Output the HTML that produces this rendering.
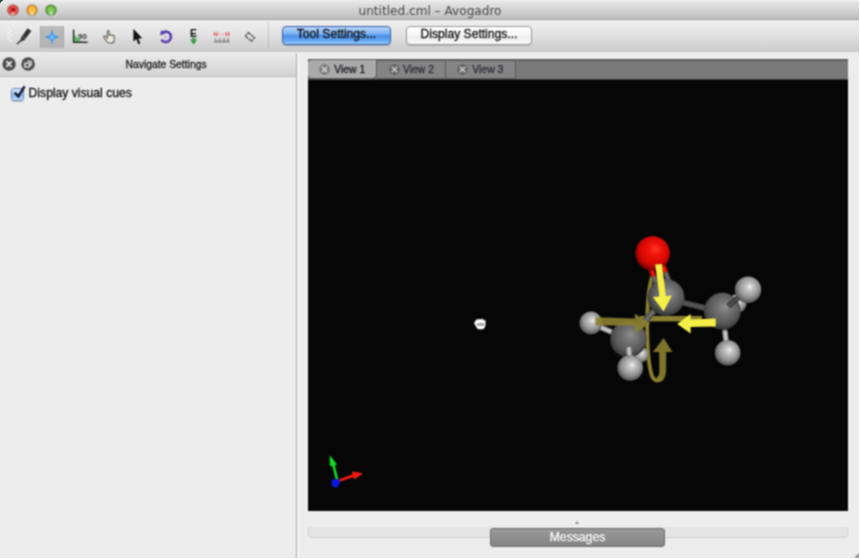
<!DOCTYPE html>
<html lang="en">
<head>
<meta charset="utf-8">
<title>untitled.cml – Avogadro</title>
<style>
*{box-sizing:border-box;margin:0;padding:0}
html,body{width:860px;height:559px;overflow:hidden;background:#fff;font-family:"Liberation Sans",sans-serif;}
#win{position:absolute;left:0;top:0;width:859px;height:558px;background:#ededed;overflow:hidden;border-radius:5px 3px 0 0;filter:url(#wb)}
#corner{position:absolute;left:0;top:0;width:4px;height:4px;background:#1c4a3a}
#titlebar{position:absolute;left:0;top:0;width:859px;height:20px;background:linear-gradient(#f2f2f2 0,#e6e6e6 1.5px,#bebebe 19px);border-bottom:1px solid #9e9e9e;border-radius:5px 3px 0 0}
#toolbar{position:absolute;left:0;top:20px;width:859px;height:32px;background:linear-gradient(#efefef 0,#e4e4e4 40%,#cacaca 100%)}
#title{position:absolute;left:1px;top:4px;width:858px;text-align:center;font-family:"DejaVu Sans","Liberation Sans",sans-serif;font-size:12.1px;color:#4a4a4a;line-height:15px}
.tl{position:absolute;top:4.9px;width:10.6px;height:10.6px;border-radius:50%}
#tl1{left:7.9px;background:radial-gradient(circle at 50% 50%,#8c0a08 0,#a81410 18%,#f0524c 45%,#f4605a 60%,#c03a36 100%);box-shadow:0 0 0 .6px #8e2a26,inset 0 0 1.5px #7a1410}
#tl2{left:26.7px;background:radial-gradient(circle at 50% 55%,#f8c050 0,#f6b840 45%,#e09a28 75%,#b87818 100%);box-shadow:0 0 0 .6px #946018,inset 0 0 1.5px #8a5810}
#tl3{left:45.5px;background:radial-gradient(circle at 50% 55%,#8cd060 0,#78c04c 45%,#58a038 75%,#3c7c24 100%);box-shadow:0 0 0 .6px #386c20,inset 0 0 1.5px #2c5c18}
.tl i{position:absolute;left:2px;right:2px;bottom:0.5px;height:5px;border-radius:50%;background:radial-gradient(ellipse at 50% 100%,rgba(255,255,255,.75),rgba(255,255,255,0) 70%)}
#sel{position:absolute;left:40px;top:26px;width:24px;height:22px;background:linear-gradient(#bcbcbc,#b2b2b2);border-left:1px solid #a6a6a6;border-right:1px solid #a6a6a6}
.btn{position:absolute;top:26px;height:19px;border-radius:4px;font-size:12.1px;line-height:15px;text-align:center;color:#111}
#b1{left:282px;width:109px;background:linear-gradient(#b6d5f7 0,#7db1f0 40%,#4a8fe9 52%,#64a8f2 80%,#98ccfa 100%);border:1px solid #3a5fae;box-shadow:0 1px 1px rgba(0,0,0,.2)}
#b2{left:406px;width:126px;background:linear-gradient(#ffffff 0,#f6f6f6 50%,#ececec 52%,#f8f8f8 100%);border:1px solid #9a9a9a;box-shadow:0 1px 1px rgba(0,0,0,.15)}
#left{position:absolute;left:0;top:53px;width:297px;height:505px;background:#ededed;border-right:1px solid #a8a8a8}
#lhead{position:absolute;left:0;top:0;width:296px;height:24px;background:linear-gradient(#eaeaea,#d4d4d4);border-bottom:1px solid #bdbdbd;font-size:10.35px;line-height:23px;color:#1a1a1a}
#lhead span{position:absolute;left:125.5px;top:0}
#cb{position:absolute;left:11.3px;top:35px;width:13px;height:13px;border-radius:3px;border:1px solid #6c82b8;background:linear-gradient(#dfe9fb 0,#a9c9f5 45%,#8fbcf4 60%,#c8e4fd 100%);box-shadow:0 1px 1px rgba(0,0,0,.2)}
#cbl,.btn,#lhead span,.tab span,#msg{-webkit-text-stroke:.3px currentColor}
#cbl{position:absolute;left:28.6px;top:33.2px;font-size:12.15px;line-height:14px;color:#111}
#split{position:absolute;left:297px;top:53px;width:2px;height:505px;background:#f6f6f6}
#tabbar{position:absolute;left:308px;top:58.5px;width:540px;height:21.5px;background:#797979;border-top:2px solid #5e5e5e;border-bottom:1px solid #383838}
.tab{position:absolute;font-size:10.4px;line-height:18px;color:#26262c}
.tab svg{position:absolute}
.tab span{position:absolute;top:0}
#t1{left:0;top:-1px;width:68px;height:18.5px;background:#aaaaaa;border-radius:4px 0 4px 4px;box-shadow:0 1.5px 0 #5a5a5a,1px 0 0 #5a5a5a;color:#1c1c24}
#t2{left:68.5px;top:0;width:69px;height:18.5px;background:#848484;color:#30303a;border-right:1px solid #5c5c5c;border-bottom:1px solid #5c5c5c}
#t3{left:137.5px;top:0;width:70px;height:18.5px;background:#848484;color:#30303a;border-right:1px solid #5c5c5c;border-bottom:1px solid #5c5c5c}
#view{position:absolute;left:308px;top:80px;width:540px;height:430.6px;background:#060606}
#bar{position:absolute;left:308px;top:527px;width:540px;height:11px;border:1px solid #d2d2d2;border-top-color:#e2e2e2;border-radius:0 0 4px 4px;background:#e4e4e4}
#msg{position:absolute;left:490px;top:528px;width:175px;height:19px;border-radius:3px;background:linear-gradient(#9a9a9a,#848484);border:1px solid #6e6e6e;color:#fff;font-size:12.2px;line-height:17px;text-align:center;text-shadow:0 -1px 0 #666}
#arr{position:absolute;left:575.2px;top:520.5px;width:0;height:0;border-left:2px solid transparent;border-right:2px solid transparent;border-bottom:3px solid #8a8a8a}
</style>
</head>
<body>
<svg width="0" height="0" style="position:absolute"><defs><filter id="wb" x="0" y="0" width="100%" height="100%" color-interpolation-filters="sRGB"><feConvolveMatrix order="3" kernelMatrix="0.0625 0.1250 0.0625 0.1250 0.2500 0.1250 0.0625 0.1250 0.0625" edgeMode="duplicate" preserveAlpha="true"/></filter></defs></svg>
<div id="corner"></div>
<div id="win">
 <div id="titlebar"></div>
 <div id="toolbar"></div>
 <div id="title">untitled.cml – Avogadro</div>
 <div class="tl" id="tl1"><i></i></div><div class="tl" id="tl2"><i></i></div><div class="tl" id="tl3"><i></i></div>
 <div id="sel"></div>
 <svg id="icons" width="280" height="32" viewBox="0 20 280 32" style="position:absolute;left:0;top:20px">
  <defs>
   <radialGradient id="gstar" cx="50%" cy="50%" r="50%"><stop offset="0" stop-color="#9ad4ff"/><stop offset=".35" stop-color="#3c9cf8"/><stop offset="1" stop-color="#1f6fe0"/></radialGradient>
  </defs>
  <!-- grip -->
  <g fill="#fafafa"><circle cx="8.5" cy="28" r="1"/><circle cx="10.5" cy="30.5" r="1"/><circle cx="8.5" cy="33" r="1"/><circle cx="10.5" cy="35.5" r="1"/><circle cx="8.5" cy="38" r="1"/><circle cx="10.5" cy="40.5" r="1"/></g>
  <!-- pencil -->
  <g>
   <path d="M27.6 28.2 L31.4 31 L24.6 40 L20.6 41.8 L21 37.6 Z" fill="#333"/>
   <path d="M21 40.2 L17.4 43.8" stroke="#3a3a3a" stroke-width="1.5" stroke-linecap="round"/>
   <path d="M22.4 36.6 L25.6 39" stroke="#8a8a8a" stroke-width=".8"/>
  </g>
  <!-- navigate star -->
  <path d="M52 28.8 C52.6 34 53.6 36 60 37 C53.6 38 52.6 40 52 45.2 C51.4 40 50.4 38 44 37 C50.4 36 51.4 34 52 28.8 Z" fill="url(#gstar)"/>
  <!-- measure -->
  <g>
   <path d="M74.4 41.8 L74.4 34.8 L81.6 41.8 Z" fill="#4cc058"/>
   <path d="M73.6 29.4 L73.6 42.2 L87.6 42.2" fill="none" stroke="#2a2a2a" stroke-width="1.5"/>
   <text x="78" y="39.2" font-family="Liberation Sans, sans-serif" font-weight="bold" font-size="7" fill="#2e2e2e" textLength="8.8" lengthAdjust="spacingAndGlyphs">90</text>
  </g>
  <!-- hand -->
  <g>
   <path d="M105.6 36.2 C104.4 35.2 103 36.2 104 37.6 L106.6 41.2 C107.4 42.6 108.4 43 110 43 L111.8 43 C113.4 43 114 42 114.2 40.6 L114.4 36.6 C114.4 35.4 113 35.2 112.8 36.2 C112.8 34.8 111.2 34.6 111 35.8 C111 34.6 109.4 34.4 109.2 35.6 L109.2 31.6 C109.2 30.2 107.4 30.2 107.4 31.6 L107.4 38 Z" fill="#efe8d8" stroke="#5c5c5c" stroke-width="1.1"/>
  </g>
  <!-- arrow cursor -->
  <path d="M133.4 28.8 L133.4 41.6 L136.3 39 L138.4 44.2 L140.4 43.4 L138.3 38.4 L142.2 38.2 Z" fill="#111"/>
  <!-- rotate -->
  <g>
   <path d="M162.2 33 A5.2 5.2 0 1 1 161.4 39.6" fill="none" stroke="#5a40b0" stroke-width="2.6"/>
   <path d="M160 35.4 L161 30.2 L165.6 33.6 Z" fill="#5a40b0"/>
   <circle cx="165.6" cy="37" r=".8" fill="#5a40b0"/>
  </g>
  <!-- E optimize -->
  <g>
   <text x="190" y="36.6" font-family="Liberation Sans, sans-serif" font-weight="bold" font-size="10.4" fill="#111">E</text>
   <path d="M192.6 37.6 L194.6 37.6 L194.6 40.4 L196.8 40.4 L193.6 44.4 L190.4 40.4 L192.6 40.4 Z" fill="#2f9a3c"/>
   <path d="M190.4 39.6 L196.8 39.6" stroke="#2f9a3c" stroke-width="1"/>
  </g>
  <!-- H-H measure -->
  <g>
   <text x="213.6" y="35.8" font-family="Liberation Sans, sans-serif" font-weight="bold" font-size="6.2" fill="#e8302c" textLength="16">H--H</text>
   <path d="M214 41.8 L229.6 41.8" stroke="#444" stroke-width=".8"/>
   <text x="214.4" y="41" font-family="Liberation Sans, sans-serif" font-size="4" fill="#333" textLength="14.6">1.0.0.0</text>
  </g>
  <!-- diamond -->
  <g transform="rotate(40 250 36.8)"><rect x="246" y="34.6" width="8" height="4.6" fill="none" stroke="#444" stroke-width="1.3" stroke-dasharray="2.6 .8"/></g>
  <!-- separator -->
  <path d="M268.3 22.5 L268.3 49.5" stroke="#8a8a8a" stroke-width="1" stroke-dasharray="1 2"/>
 </svg>
 <div class="btn" id="b1">Tool Settings...</div>
 <div class="btn" id="b2">Display Settings...</div>
 <div id="left">
  <div id="lhead"><svg width="40" height="24" viewBox="0 0 40 24" style="position:absolute;left:0;top:0">
    <circle cx="9.1" cy="11" r="6.7" fill="#4c4c4c"/><circle cx="28.1" cy="11" r="6.7" fill="#4c4c4c"/>
    <path d="M7 8.9 L11.2 13.1 M11.2 8.9 L7 13.1" stroke="#ececec" stroke-width="2" stroke-linecap="round"/>
    <path d="M27.2 8.3 L31.3 8.3 L31.3 11.9 L29.8 11.9" fill="none" stroke="#e4e4e4" stroke-width="1.2"/>
    <rect x="24.9" y="10.3" width="4.6" height="3.6" fill="#4c4c4c" stroke="#f0f0f0" stroke-width="1.3"/>
   </svg><span>Navigate Settings</span></div>
  <div id="cb"></div>
  <svg width="18" height="18" viewBox="0 0 18 18" style="position:absolute;left:10px;top:30px"><path d="M4.6 9.6 L8.4 13.4 L14.6 3.4" fill="none" stroke="#131c34" stroke-width="2.5" stroke-linejoin="miter"/></svg>
  <div id="cbl">Display visual cues</div>
 </div>
 <div id="split"></div>
 <div id="tabbar">
  <div class="tab" id="t1"><svg style="left:11.3px;top:4.4px" width="11" height="11" viewBox="0 0 11 11"><circle cx="5.5" cy="5.5" r="5.4" fill="#7c7c7c"/><path d="M3.3 3.3 L7.7 7.7 M7.7 3.3 L3.3 7.7" stroke="#cfcfcf" stroke-width="1.7" stroke-linecap="round"/></svg><span style="left:26.2px;top:1px">View 1</span></div>
  <div class="tab" id="t2"><svg style="left:12.2px;top:3.6px" width="11" height="11" viewBox="0 0 11 11"><circle cx="5.5" cy="5.5" r="5.4" fill="#666666"/><path d="M3.3 3.3 L7.7 7.7 M7.7 3.3 L3.3 7.7" stroke="#c6c6c6" stroke-width="1.7" stroke-linecap="round"/></svg><span style="left:26.5px">View 2</span></div>
  <div class="tab" id="t3"><svg style="left:11.2px;top:3.6px" width="11" height="11" viewBox="0 0 11 11"><circle cx="5.5" cy="5.5" r="5.4" fill="#666666"/><path d="M3.3 3.3 L7.7 7.7 M7.7 3.3 L3.3 7.7" stroke="#c6c6c6" stroke-width="1.7" stroke-linecap="round"/></svg><span style="left:26.8px">View 3</span></div>
 </div>
 <div id="view"><!--SCENE_START--><svg id="scene" width="540" height="431" viewBox="308 79 540 431" style="position:absolute;left:0;top:-1px">
<defs>
 <radialGradient id="gC" cx="52%" cy="44%" r="60%" fx="58%" fy="38%"><stop offset="0" stop-color="#8e8e8e"/><stop offset=".3" stop-color="#747474"/><stop offset=".7" stop-color="#565656"/><stop offset="1" stop-color="#2a2a2a"/></radialGradient>
 <radialGradient id="gH" cx="52%" cy="44%" r="60%" fx="58%" fy="38%"><stop offset="0" stop-color="#f0f0f0"/><stop offset=".22" stop-color="#c6c6c6"/><stop offset=".6" stop-color="#969696"/><stop offset="1" stop-color="#444444"/></radialGradient>
 <radialGradient id="gO" cx="52%" cy="44%" r="60%" fx="60%" fy="36%"><stop offset="0" stop-color="#ff3826"/><stop offset=".3" stop-color="#f0140a"/><stop offset=".7" stop-color="#cf0602"/><stop offset="1" stop-color="#5c0000"/></radialGradient>
</defs>
<g>
<path d="M652.5 275 C644.5 300 646.5 360 652 376 Q656 384 661.5 378" fill="none" stroke="#8a802e" stroke-width="3.8"/>
<rect x="640" y="316" width="62" height="5.4" fill="#8a802e"/>
<circle cx="640.8" cy="354.8" r="7.8" fill="url(#gH)"/>
<line x1="666" y1="297.4" x2="647.2" y2="318.3" stroke="#4c4c4c" stroke-width="6.4"/>
<line x1="647.2" y1="318.3" x2="628.4" y2="339.2" stroke="#4c4c4c" stroke-width="6.4"/>
<line x1="666" y1="297.4" x2="647.2" y2="318.3" stroke="#7a7a7a" stroke-width="2.6" opacity=".8"/>
<line x1="647.2" y1="318.3" x2="628.4" y2="339.2" stroke="#7a7a7a" stroke-width="2.6" opacity=".8"/>
<line x1="666" y1="298.4" x2="694.1" y2="305.3" stroke="#464646" stroke-width="6"/>
<line x1="694.1" y1="305.3" x2="722.3" y2="312.2" stroke="#464646" stroke-width="6"/>
<line x1="666" y1="298.4" x2="694.1" y2="305.3" stroke="#5c5c5c" stroke-width="2.4" opacity=".8"/>
<line x1="694.1" y1="305.3" x2="722.3" y2="312.2" stroke="#5c5c5c" stroke-width="2.4" opacity=".8"/>
<line x1="648.6" y1="262" x2="653.8" y2="276.4" stroke="#b40000" stroke-width="5.4"/>
<line x1="653.8" y1="276.4" x2="659.4" y2="292" stroke="#4c4c4c" stroke-width="5.4"/>
<line x1="648.6" y1="262" x2="653.8" y2="276.4" stroke="#ff2a1a" stroke-width="2.2" opacity=".8"/>
<line x1="653.8" y1="276.4" x2="659.4" y2="292" stroke="#7a7a7a" stroke-width="2.2" opacity=".8"/>
<line x1="660.4" y1="258" x2="665.6" y2="272.4" stroke="#b40000" stroke-width="5.4"/>
<line x1="665.6" y1="272.4" x2="671.2" y2="288" stroke="#4c4c4c" stroke-width="5.4"/>
<line x1="660.4" y1="258" x2="665.6" y2="272.4" stroke="#ff2a1a" stroke-width="2.2" opacity=".8"/>
<line x1="665.6" y1="272.4" x2="671.2" y2="288" stroke="#7a7a7a" stroke-width="2.2" opacity=".8"/>
<line x1="590.9" y1="323" x2="611.5" y2="331.9" stroke="#9a9a9a" stroke-width="5.4"/>
<line x1="611.5" y1="331.9" x2="628.4" y2="339.2" stroke="#4c4c4c" stroke-width="5.4"/>
<line x1="590.9" y1="323" x2="611.5" y2="331.9" stroke="#dcdcdc" stroke-width="2.2" opacity=".8"/>
<line x1="611.5" y1="331.9" x2="628.4" y2="339.2" stroke="#7a7a7a" stroke-width="2.2" opacity=".8"/>
<circle cx="590.9" cy="323" r="11.4" fill="url(#gH)"/>
<circle cx="628.4" cy="339.2" r="18.2" fill="url(#gC)"/>
<line x1="630.2" y1="363.9" x2="629.5" y2="355.5" stroke="#9a9a9a" stroke-width="5.2"/>
<line x1="629.5" y1="355.5" x2="628.8" y2="347.2" stroke="#9a9a9a" stroke-width="5.2"/>
<line x1="630.2" y1="363.9" x2="629.5" y2="355.5" stroke="#dcdcdc" stroke-width="2.1" opacity=".8"/>
<line x1="629.5" y1="355.5" x2="628.8" y2="347.2" stroke="#dcdcdc" stroke-width="2.1" opacity=".8"/>
<circle cx="630.2" cy="367.9" r="12.8" fill="url(#gH)"/>
<circle cx="666" cy="297.4" r="18.4" fill="url(#gC)"/>
<circle cx="652.6" cy="253.4" r="17.2" fill="url(#gO)"/>
<circle cx="737" cy="303.5" r="9.5" fill="url(#gH)"/>
<line x1="727.6" y1="352.8" x2="724.9" y2="330.7" stroke="#9a9a9a" stroke-width="5.4"/>
<line x1="724.9" y1="330.7" x2="723.3" y2="317.2" stroke="#4c4c4c" stroke-width="5.4"/>
<line x1="727.6" y1="352.8" x2="724.9" y2="330.7" stroke="#dcdcdc" stroke-width="2.2" opacity=".8"/>
<line x1="724.9" y1="330.7" x2="723.3" y2="317.2" stroke="#7a7a7a" stroke-width="2.2" opacity=".8"/>
<circle cx="722.3" cy="311.2" r="18.4" fill="url(#gC)"/>
<line x1="748" y1="289.7" x2="740.1" y2="296.3" stroke="#9a9a9a" stroke-width="5.6"/>
<line x1="740.1" y1="296.3" x2="728.3" y2="306.2" stroke="#3a3a3a" stroke-width="5.6"/>
<line x1="748" y1="289.7" x2="740.1" y2="296.3" stroke="#dcdcdc" stroke-width="2.2" opacity=".8"/>
<line x1="740.1" y1="296.3" x2="728.3" y2="306.2" stroke="#555" stroke-width="2.2" opacity=".8"/>
<circle cx="748" cy="289.7" r="13.2" fill="url(#gH)"/>
<circle cx="727.6" cy="352.8" r="12.8" fill="url(#gH)"/>
<g opacity=".9">
<path d="M595.6 317.2 L634.8 318.4 L634.8 313.8 L650.2 323.2 L634.8 333.2 L634.8 325.6 L595.6 325.6 Z" fill="#8a802e"/>
<path d="M663.7 338 L672.4 352 L666.2 352 L666 372 Q665 382 658 382 L656 378 Q659.6 376 659.4 370 L659.2 352 L653 352 Z" fill="#8a802e"/>
</g>
<path d="M677.2 324 L690.6 314 L690.6 319.6 L715.8 318.6 L715.8 326.4 L690.6 327 L690.6 333.6 Z" fill="#f4ee48"/>
<path d="M655.2 264.6 L662 264 L665.9 296 L672 295.4 L663.6 311.4 L652.8 297 L659.4 296.6 Z" fill="#f4ee48"/>
</g>
<g id="cursor"><path d="M475.6 321.6 Q475.4 319.6 477.4 319.6 L478 320.4 Q478.4 318.8 480 319.2 L480.6 320 Q481.2 318.6 482.8 319.2 L483.2 320.4 Q484.4 319.4 485.2 320.6 L485.2 325 Q485 328.4 482.6 329 L478.6 329 Q476.4 328 475.8 325.4 L474.4 323.6 Q474.2 322.2 475.6 321.6 Z" fill="#fff" stroke="#e8e8e8" stroke-width=".6"/>
<path d="M478.2 323 L478.2 326 M480.6 322.8 L480.6 326 M483 323 L483 326" stroke="#222" stroke-width=".9"/></g>
<g>
<path d="M337.2 480.4 L333.2 464" stroke="#12e022" stroke-width="2.6"/>
<path d="M330.2 456.4 L336.4 464.4 L330.4 465.8 Z" fill="#12e022" stroke="#12e022" stroke-width="1" stroke-linejoin="round"/>
<path d="M337.6 481 L353.4 475.6" stroke="#ee1a10" stroke-width="2.8"/>
<path d="M362.2 473.6 L352.4 472 L354.4 478.8 Z" fill="#ee1a10" stroke="#ee1a10" stroke-width="1" stroke-linejoin="round"/>
<path d="M332.2 480.2 L338.8 479.6 L339 484.2 L336 487 L332.6 485.4 Z" fill="#0818e0" stroke="#0818e0" stroke-width="1.4" stroke-linejoin="round"/>
</g>
</svg><!--SCENE_END--></div>
 <div id="arr"></div>
 <div id="bar"></div>
 <div id="msg">Messages</div>
 <svg width="6" height="6" viewBox="0 0 6 6" style="position:absolute;left:853px;top:552px"><path d="M5.6 1.4 L5.6 5.6 L1.4 5.6 Z" fill="#7a7a7a"/></svg>
</div>
</body>
</html>
